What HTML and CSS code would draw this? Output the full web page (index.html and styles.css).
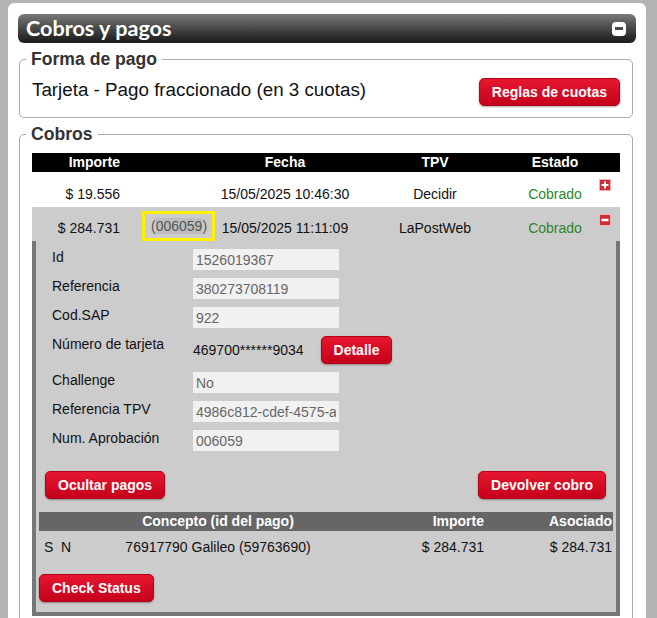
FILE: index.html
```html
<!DOCTYPE html>
<html lang="es">
<head>
<meta charset="utf-8">
<title>Cobros y pagos</title>
<link rel="stylesheet" href="styles.css">
</head>
<body>
<div class="panel">
  <div class="titlebar">
    <h1>Cobros y pagos</h1>
    <span class="collapse"></span>
  </div>

  <fieldset class="box">
    <legend>Forma de pago</legend>
    <div class="pay-row">
      <span class="pay-type">Tarjeta - Pago fraccionado (en 3 cuotas)</span>
      <button class="btn">Reglas de cuotas</button>
    </div>
  </fieldset>

  <fieldset class="box cobros">
    <legend>Cobros</legend>
    <table class="cobros-table">
      <colgroup>
        <col class="c1"><col class="c2"><col class="c3"><col class="c4"><col class="c5"><col class="c6">
      </colgroup>
      <thead>
        <tr><th class="num">Importe</th><th></th><th>Fecha</th><th>TPV</th><th>Estado</th><th></th></tr>
      </thead>
      <tbody>
        <tr class="r1">
          <td class="num">$ 19.556</td>
          <td></td>
          <td>15/05/2025 10:46:30</td>
          <td>Decidir</td>
          <td class="ok">Cobrado</td>
          <td class="ic"><svg width="12" height="12" viewBox="0 0 12 12"><rect width="12" height="12" fill="#f2b1b1"/><rect x="1" y="1" width="10" height="10" fill="#d12a3a"/><path d="M2.5 6h7M6 2.5v7" stroke="#fff" stroke-width="2"/></svg></td>
        </tr>
        <tr class="r2">
          <td class="num">$ 284.731</td>
          <td class="code"><span class="code-box">(<span class="hl">006059</span>)</span></td>
          <td>15/05/2025 11:11:09</td>
          <td>LaPostWeb</td>
          <td class="ok">Cobrado</td>
          <td class="ic"><svg width="12" height="12" viewBox="0 0 12 12"><rect width="12" height="12" fill="#f2b1b1"/><rect x="1" y="1" width="10" height="10" fill="#d12a3a"/><path d="M2.5 6h7" stroke="#fff" stroke-width="2.5"/></svg></td>
        </tr>
        <tr class="detail-row">
          <td colspan="6">
            <div class="detail">
              <div class="form">
                <span class="lbl">Id</span><input class="fld" readonly value="1526019367">
                <span class="lbl">Referencia</span><input class="fld" readonly value="380273708119">
                <span class="lbl">Cod.SAP</span><input class="fld" readonly value="922">
                <span class="lbl">Número de tarjeta</span>
                <div class="card"><span>469700******9034</span><button class="btn">Detalle</button></div>
                <span class="lbl">Challenge</span><input class="fld" readonly value="No">
                <span class="lbl">Referencia TPV</span><input class="fld" readonly value="4986c812-cdef-4575-a9b1-3f0c">
                <span class="lbl">Num. Aprobación</span><input class="fld" readonly value="006059">
              </div>
              <div class="actions">
                <button class="btn">Ocultar pagos</button>
                <button class="btn">Devolver cobro</button>
              </div>
              <table class="pagos">
                <colgroup><col class="p1"><col class="p2"><col class="p3"><col class="p4"><col class="p5"></colgroup>
                <thead>
                  <tr><th></th><th></th><th>Concepto (id del pago)</th><th class="r">Importe</th><th class="r last">Asociado</th></tr>
                </thead>
                <tbody>
                  <tr><td class="s">S</td><td class="n">N</td><td class="cc">76917790 Galileo (59763690)</td><td class="r">$ 284.731</td><td class="r last">$ 284.731</td></tr>
                </tbody>
              </table>
              <button class="btn check">Check Status</button>
            </div>
          </td>
        </tr>
      </tbody>
    </table>
  </fieldset>
</div>
</body>
</html>
```
FILE: styles.css
```css
html, body {
  overflow: hidden;
}
body {
  margin: 0;
  background: #b4b4b4;
  font-family: "Liberation Sans", Arial, sans-serif;
  font-size: 14px;
  color: #111;
}
.panel {
  margin: 3px 11px 0 8px;
  background: #fff;
  border-radius: 6px 6px 0 0;
  padding: 11px 10px 20px;
  min-height: 700px;
}
.titlebar {
  display: flex;
  align-items: center;
  justify-content: space-between;
  height: 29px;
  padding: 0 10px 0 8px;
  border-radius: 6px;
  background: linear-gradient(to bottom, #7a7a7a 0%, #474747 50%, #262626 85%, #1e1e1e 100%);
}
.titlebar h1 {
  margin: 0;
  font: 700 21.6px Lato, "DejaVu Sans", sans-serif;
  color: #fff;
  line-height: 29px;
}
.collapse {
  width: 14px;
  height: 14px;
  background: #fff;
  border-radius: 4px;
  display: flex;
  align-items: center;
  justify-content: center;
}
.collapse::before {
  content: "";
  width: 8px;
  height: 3px;
  background: #4a4a4a;
}
.box {
  margin: 6px 3px 0 1px;
  border: 1px solid #aaa;
  border-radius: 5px;
  padding: 9px 12px 11px;
  min-width: 0;
}
.box legend {
  margin-left: -6px;
  padding: 0 5px;
  font-size: 17.6px;
  font-weight: 700;
  line-height: 20px;
  color: #333;
}
.pay-row {
  display: flex;
  align-items: center;
  justify-content: space-between;
}
.pay-type {
  font-size: 18.8px;
  color: #111;
  margin-top: -4px;
}
.btn {
  height: 28px;
  padding: 0 12px;
  border: 1px solid #b40019;
  border-radius: 5px;
  background: linear-gradient(to bottom, #e5182f, #c5001b);
  color: #fff;
  font: 700 14px "Liberation Sans", Arial, sans-serif;
  box-shadow: 0 1px 2px rgba(0, 0, 0, 0.35);
  white-space: nowrap;
}
.cobros-table {
  width: 100%;
  table-layout: fixed;
  border-collapse: collapse;
}
.c1 { width: 98px; }
.c2 { width: 88px; }
.c3 { width: 134px; }
.c4 { width: 166px; }
.c5 { width: 74px; }
.c6 { width: 28px; }
.cobros-table > thead > tr > th {
  background: #000;
  color: #fff;
  font-weight: 700;
  height: 19px;
  line-height: 19px;
  padding: 0;
  text-align: center;
}
.cobros-table > tbody > tr > td {
  padding: 8px 0 0;
  text-align: center;
  vertical-align: middle;
}
.cobros-table > thead > tr > th.num,
.cobros-table > tbody > tr > td.num {
  text-align: right;
  padding-right: 10px;
}
tr.r1 { height: 35px; }
tr.r2 { height: 34px; }
tr.r2 > td { background: #ccc; }
.ok { color: #2c862c; }
.cobros-table > tbody > tr > td.ic {
  vertical-align: top;
  text-align: left;
  padding: 7px 0 0 7px;
}
.ic svg { display: block; }
.cobros-table > tbody > tr > td.code {
  vertical-align: bottom;
  text-align: left;
  padding: 0 0 0 12px;
}
.code-box {
  display: block;
  width: 73px;
  box-sizing: border-box;
  height: 30px;
  line-height: 24px;
  padding: 0 5px 0 6px;
  border: 3px solid #fff200;
  color: #555;
}
.hl { background: #bdbdbd; }
.cobros-table > tbody > tr.detail-row > td { padding: 0; }
.detail {
  background: #ccc;
  border: 4px solid #777;
  border-top: 0;
  padding: 8px 3px 10px;
  text-align: left;
}
.form {
  display: grid;
  grid-template-columns: 141px 1fr;
  row-gap: 8px;
  padding-left: 13px;
  align-items: start;
}
.lbl {
  line-height: 16px;
}
.fld {
  display: block;
  box-sizing: border-box;
  width: 146px;
  height: 21px;
  margin: 0;
  border: 0;
  padding: 0 3px;
  background: #f1f1f1;
  color: #666;
  font: 14px "Liberation Sans", Arial, sans-serif;
  outline: none;
}
.card {
  display: flex;
  align-items: center;
  gap: 17px;
}
.actions {
  display: flex;
  justify-content: space-between;
  margin-top: 20px;
  padding: 0 7px 0 6px;
}
.pagos {
  width: 100%;
  table-layout: fixed;
  border-collapse: collapse;
  margin-top: 13px;
}
.p1 { width: 16px; }
.p2 { width: 55px; }
.p3 { width: 216px; }
.p4 { width: 160px; }
.p5 { width: 127px; }
.pagos th {
  background: #666;
  color: #fff;
  font-weight: 700;
  height: 19px;
  line-height: 19px;
  padding: 0;
  text-align: center;
}
.pagos tbody tr { height: 32px; }
.pagos td {
  padding: 0;
  text-align: center;
}
.pagos .r { text-align: right; padding-right: 2px; }
.pagos .last { padding-right: 1px; }
.pagos td.s { text-align: left; padding-left: 5px; }
.pagos td.n { text-align: left; padding-left: 6px; }
.check {
  margin-top: 11px;
}
```
